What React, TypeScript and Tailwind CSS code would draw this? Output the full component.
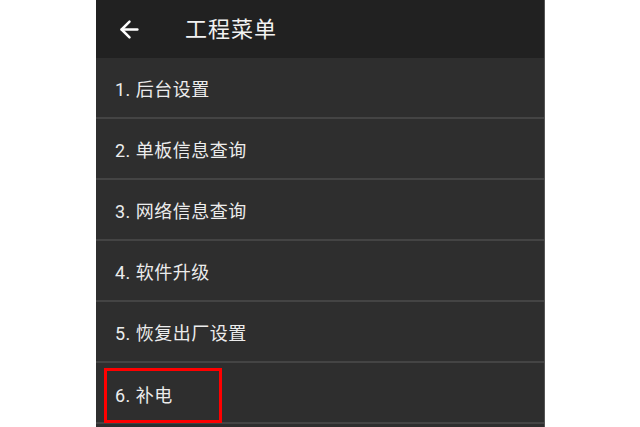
import { ArrowLeft } from 'lucide-react'

const items = ['1. 后台设置', '2. 单板信息查询', '3. 网络信息查询', '4. 软件升级', '5. 恢复出厂设置', '6. 补电']

export default function App() {
  return (
    <div
      className="w-[640px] h-[427px] bg-white overflow-hidden flex"
      style={{ fontFamily: 'Roboto, "Noto Sans CJK SC", sans-serif' }}
    >
      <div className="ml-[96px] w-[449px] h-full bg-[#2e2e2e] border-r border-[#555] flex flex-col">
        {/* Header */}
        <div className="h-[58px] shrink-0 bg-[#212121] flex items-center pl-[20px]">
          <ArrowLeft size={27} strokeWidth={2.2} className="text-white" />
          <span className="ml-[42px] text-[22px] text-[#f2f2f2] tracking-[1px]">工程菜单</span>
        </div>

        {items.map((label, i) => (
          <div
            key={label}
            className="h-[61px] shrink-0 border-b-2 border-[#444] flex items-center pt-[3px]"
          >
            {i === items.length - 1 ? (
              <div className="ml-[8px] mt-[3px] w-[118px] h-[55px] border-[3px] border-[#ff0000] flex items-center pl-[8px]">
                <span className="text-[18px] text-[#ececec] tracking-[0.5px]">{label}</span>
              </div>
            ) : (
              <span className="ml-[19px] text-[18px] text-[#ececec] tracking-[0.5px]">{label}</span>
            )}
          </div>
        ))}
      </div>
    </div>
  )
}
